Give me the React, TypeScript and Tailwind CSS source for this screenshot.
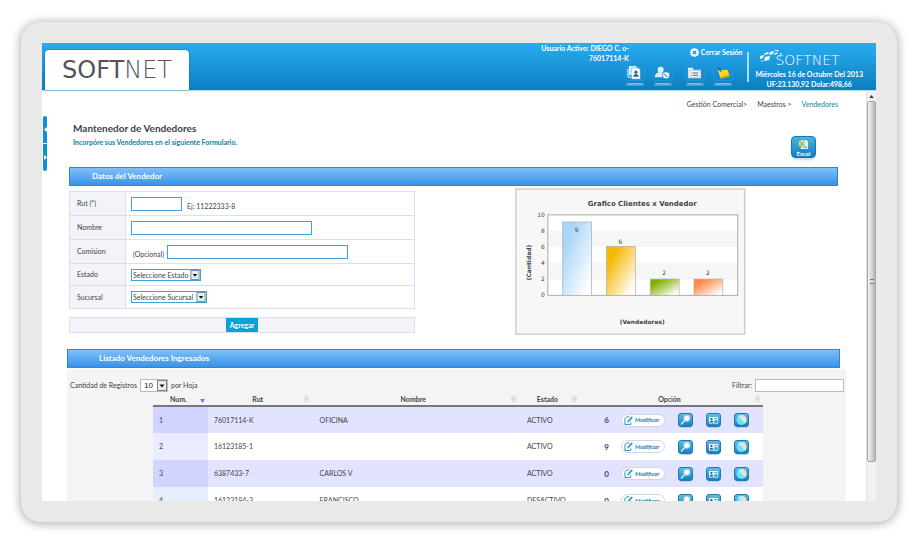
import React from "react";

const sellers = [
  { num: 1, rut: "76017114-K", name: "OFICINA", status: "ACTIVO", clients: 6 },
  { num: 2, rut: "16123185-1", name: "", status: "ACTIVO", clients: 9 },
  { num: 3, rut: "6387433-7", name: "CARLOS V", status: "ACTIVO", clients: 0 },
  { num: 4, rut: "16123184-3", name: "FRANCISCO", status: "DESACTIVO", clients: 0 },
];

const bars = [
  { value: 9, x: 48, from: "#a9d5f7", labelY: 44 },
  { value: 6, x: 92, from: "#f6b800", labelY: 56 },
  { value: 2, x: 136, from: "#7fb000", labelY: 88 },
  { value: 2, x: 180, from: "#ff8743", labelY: 88 },
];

const ticks = [0, 2, 4, 6, 8, 10];

const fieldStyle = "h-[14px] border border-[#3fa3d8] bg-white px-1 text-[7px] outline-none";

const Header = () => {
  return (
    <header className="flex h-12 shrink-0 justify-between border-b border-[#b5dcf2] bg-gradient-to-b from-[#29acf1] to-[#0a7fc0] text-white">
      {/* Logo tab */}
      <div className="ml-[3px] mt-[7px] flex w-36 items-center justify-center rounded-t-[4px] bg-white shadow-[0_0_2px_#075d95]">
        <a href="#" className="pb-px font-['DejaVu_Sans'] text-[24px] leading-[24px] text-[#555]">
          SOFT<span className="font-extralight text-[#555]">NET</span>
        </a>
      </div>

      <div className="flex pr-[13px]">
        {/* User */}
        <div className="mr-3 flex flex-col items-end">
          <div className="pr-11 text-right text-[7px] leading-[10px] font-bold">
            <p>Usuario Activo: DIEGO C. o-</p>
            <p>76017114-K</p>
          </div>
          <div className="flex gap-2">
            <HeaderButton label="Clientes">
              <path d="M2 1h8v10H2z" fill="#d8ecf8" />
              <path d="M5 3h7l2 2v10H5z" fill="#fff" stroke="#6bb2dc" strokeWidth=".6" />
              <circle cx="9.5" cy="7.6" r="1.7" fill="#2a6592" />
              <path d="M6.5 12.5c.2-2 1.6-3 3-3s2.800 1 3 3z" fill="#2a6592" />
              <path d="M4.500 13H1V4" stroke="#fff" fill="none" />
            </HeaderButton>
            <HeaderButton label="Contactos">
              <circle cx="6" cy="5" r="3.200" fill="#eef8ff" />
              <path d="M0 13c0-4 2.500-5.200 6-5.200s5.500 1.500 5.500 5.200z" fill="#d9effc" />
              <circle cx="11.800" cy="11" r="3.900" fill="#fff" stroke="#2498dc" />
              <path d="M10.200 9.400c.4 1.600 1.500 2.800 3.200 3.200" stroke="#1b7ebc" strokeWidth="1.100" fill="none" />
            </HeaderButton>
          </div>
        </div>

        {/* Session */}
        <div className="mr-[5px] flex flex-col justify-start pt-1">
          <button className="flex items-center gap-[2px] pl-[5px] text-[7px] leading-[11px] font-bold">
            <svg viewBox="0 0 10 10" className="size-[9px]">
              <circle cx="5" cy="5" r="4.800" fill="#fff" />
              <path d="m3.200 3.200 3.600 3.600m0-3.600L3.200 6.800" stroke="#1689cc" strokeWidth="1.400" />
            </svg>
            Cerrar Sesión
          </button>
          <div className="mt-[5px] flex gap-2">
            <HeaderButton label="Documentos">
              <path d="M1 3h5l1 2h8v9H1z" fill="#e9f1f6" />
              <path d="M2 6h12v7H2z" fill="#fff" stroke="#8fa9bb" strokeWidth=".6" />
              <path d="M4 8.500h1m1 0h6M4 11h1m1 0h6" stroke="#40627c" strokeWidth="1.100" />
            </HeaderButton>
            <HeaderButton label="Notas">
              <path d="M3 5.500 13.500 5l2 7-9.500 2.500z" fill="#ffd329" />
              <path d="m6 14.500 9.500-2.500-1-1.500L5 13z" fill="#e5a400" />
              <path d="m2 1 4 3 1 4-3-3z" fill="#1664bd" />
            </HeaderButton>
          </div>
        </div>

        <div className="mt-[9px] h-[30px] w-[2px] bg-[#a9def8]" />

        {/* Company info */}
        <div className="ml-[6px] flex flex-col items-center pt-[6px] text-[7px] leading-[10px] font-bold">
          <div className="flex h-5 self-start pl-1">
            <svg viewBox="0 0 24 16" className="-mr-2 h-4 w-6">
              <path d="M6 4l4-1-1 2-4 1zM1 7l4-1-1 3-3 1zM6 8l5-1-1 4-5 1zM11 3l4-1-1 3-4 1zM16 4l3-1-1 2-3 1zM16 1l4 0-1 1h-3zM21 4l2 1-2 1zM2 12l2-1-1 2zM20 7l2 0-1 1z" fill="#fff" />
            </svg>
            <span className="pt-[4px] font-['DejaVu_Sans'] text-[14px] leading-[14px] font-light">SOFTNET</span>
          </div>
          <p>Miércoles 16 de Octubre Del 2013</p>
          <p>UF:23.130,92 Dolar:498,66</p>
        </div>
      </div>
    </header>
  );
};

const HeaderButton = ({ label, children }: { label: string; children: React.ReactNode }) => {
  return (
    <button aria-label={label} className="flex flex-col items-center">
      <span className="flex h-[18px] w-5 items-center justify-center rounded-[3px] border border-[#2196d8]">
        <svg viewBox="0 0 16 16" className="size-[15px]">
          {children}
        </svg>
      </span>
      <span className="mt-[2px] h-[3px] w-[18px] rounded-t-[3px] bg-gradient-to-b from-[#8fc9ea] to-[#2b93cf]" />
    </button>
  );
};

const SectionBar = ({ title, className }: { title: string; className: string }) => {
  return (
    <h2
      className={`h-[19px] border border-[#2f86d4] bg-gradient-to-b from-[#7dc0fb] to-[#3893e4] text-[8px] leading-[17px] font-bold text-white ${className}`}
    >
      {title}
    </h2>
  );
};

const DropDown = ({ id, option, className }: { id: string; option: string; className: string }) => {
  return (
    <span className="relative inline-flex">
      <select id={id} className={`appearance-none outline-none ${className}`}>
        <option>{option}</option>
      </select>
      <svg viewBox="0 0 10 11" className="pointer-events-none absolute right-px top-px bottom-px h-[calc(100%-2px)] w-[10px]">
        <rect x=".5" y=".5" width="9" height="10" fill="#ececec" stroke="#6d8794" />
        <path d="M2.500 4.500h5L5 7.500z" fill="#111" />
      </svg>
    </span>
  );
};

const FormRow = ({ id, label, height, children }: { id: string; label: string; height: string; children: React.ReactNode }) => {
  return (
    <div className={`flex border-b border-[#dadef0] last:border-b-0 ${height}`}>
      <label htmlFor={id} className="flex w-14 items-center border-r border-[#dadef0] bg-[#f3f4fa] pl-[7px]">
        {label}
      </label>
      <div className="flex flex-1 items-center gap-[3px] pl-[5px]">{children}</div>
    </div>
  );
};

const Chart = () => {
  return (
    <svg viewBox="0 0 232 148" className="block w-full font-['DejaVu_Sans']" role="img" aria-label="Grafico Clientes x Vendedor">
      <defs>
        {bars.map((bar, i) => (
          <linearGradient key={i} id={`bar${i}`} x1="0" y1="0" x2="1" y2="1">
            <stop offset=".2" stopColor={bar.from} />
            <stop offset=".9" stopColor="#fff" />
          </linearGradient>
        ))}
      </defs>
      <rect x="1" y="1" width="230" height="146" fill="#f7f7f7" stroke="#cfcfcf" strokeWidth="1.500" />
      <text x="128" y="18" textAnchor="middle" fontSize="7" fontWeight="bold" fill="#444">
        Grafico Clientes x Vendedor
      </text>
      <rect x="33" y="27" width="191" height="81" fill="#fff" />
      <path d="M33 43h191v16H33zM33 75h191v17H33z" fill="#f6f6f6" />
      <rect x="33" y="27" width="191" height="81" fill="none" stroke="#aaa" />
      {ticks.map((tick) => (
        <text key={tick} x="30" y={110 - tick * 8.100} textAnchor="end" fontSize="6" fill="#444">
          {tick}
        </text>
      ))}
      {bars.map((bar, i) => (
        <g key={i}>
          <rect x={bar.x} y={108 - bar.value * 8.200} width="29" height={bar.value * 8.200} fill={`url(#bar${i})`} stroke="#b3b3b3" strokeWidth=".8" />
          <text x={bar.x + 14} y={bar.labelY} textAnchor="middle" fontSize="6" fill="#444">
            {bar.value}
          </text>
        </g>
      ))}
      <text x="128" y="137" textAnchor="middle" fontSize="6" fontWeight="bold" fill="#444">
        (Vendedores)
      </text>
      <text transform="translate(16 75) rotate(-90)" textAnchor="middle" fontSize="6" fontWeight="bold" fill="#444">
        (Cantidad)
      </text>
    </svg>
  );
};

const SortIcon = ({ active }: { active?: boolean }) => {
  return (
    <svg viewBox="0 0 6 10" className="absolute right-[3px] top-[3px] h-2 w-[5px]">
      {active ? <path d="M0 5h6L3 10z" fill="#6f76f5" /> : <path d="M3 .5 5.500 4.500h-5zM3 9.500.5 5.500h5z" fill="#eee" stroke="#c4c4c4" strokeWidth=".6" />}
    </svg>
  );
};

const TileButton = ({ label, children }: { label: string; children: React.ReactNode }) => {
  return (
    <button
      aria-label={label}
      className="flex h-[14px] w-[15px] items-center justify-center rounded-[3px] border border-[#2279ab] bg-gradient-to-b from-[#62bdea] to-[#0b82c5] shadow-[0_2px_1px_-1px_#c6cbd8]"
    >
      <svg viewBox="0 0 13 12" className="h-3 w-[13px]">
        {children}
      </svg>
    </button>
  );
};

const columns = [
  { title: "Num.", width: "w-[9%]" },
  { title: "Rut", width: "w-[17%]" },
  { title: "Nombre", width: "w-[34%]" },
  { title: "Estado", width: "w-[10%]" },
  { title: "Opción", width: "w-[30%]" },
];

const SellersTable = () => {
  return (
    <table className="w-full table-fixed border-collapse text-[7px] text-[#444]">
      <thead>
        <tr className="h-[14px] border-b-2 border-[#77777f]">
          {columns.map((column, i) => (
            <th key={column.title} className={`relative p-0 pr-1 font-bold leading-3 ${column.width}`}>
              {column.title}
              <SortIcon active={i === 0} />
            </th>
          ))}
        </tr>
      </thead>
      <tbody>
        {sellers.map((seller) => (
          <tr key={seller.num} className="group h-[27px] odd:bg-[#e2e3ff] even:bg-white">
            <td className="p-0 pl-[6px] group-odd:bg-[#d1d4ff] group-even:bg-[#e9ebff]">{seller.num}</td>
            <td className="p-0 pl-[6px]">{seller.rut}</td>
            <td className="p-0 pl-2">{seller.name}</td>
            <td className="p-0 pl-2">{seller.status}</td>
            <td className="p-0">
              <div className="flex items-center gap-[13px]">
                <span className="-mr-px w-[29px] text-right text-[8px] font-bold text-[#3d3792]">{seller.clients}</span>
                <button className="flex h-[13px] w-11 items-center gap-[2px] rounded-full border border-[#cfd6e2] bg-white pl-[2px] text-[6px] font-bold italic leading-none text-[#1a7db3]">
                  <svg viewBox="0 0 10 10" className="size-[9px] shrink-0" fill="none" stroke="#1b86bd">
                    <path d="M6 1H3L1 3v6.400h6.500V7" />
                    <path d="m4 7 .5-1.800L8.500.8l1 1-4.200 4.500z" fill="#1b86bd" strokeWidth=".5" />
                  </svg>
                  Modificar
                </button>
                <TileButton label="Ver">
                  <path d="m2 10.500 4-4.500" stroke="#d5f1ff" strokeWidth="1.400" />
                  <circle cx="7.800" cy="4.300" r="3" fill="#fff" stroke="#b3cbd8" strokeWidth=".8" />
                </TileButton>
                <TileButton label="Clientes">
                  <path d="M2 3h9v6.500H2z" fill="#eef7fb" />
                  <circle cx="4.500" cy="5" r="1.100" fill="#26526e" />
                  <path d="M2.700 8.500c0-2.500 3.600-2.500 3.600 0z" fill="#26526e" />
                  <path d="M7.500 4.500h2.500" stroke="#4a86a5" strokeWidth=".8" />
                  <circle cx="9" cy="7.700" r="2.200" fill="#35b5cf" stroke="#d9f3fa" strokeWidth=".6" />
                </TileButton>
                <TileButton label="Estadísticas">
                  <circle cx="6.500" cy="6" r="5" fill="#6fe0fa" />
                  <path d="M6.500 6V1A5 5 0 0 1 10 9.500z" fill="#e9e6c9" />
                  <path d="M6.500 6 3 2.500A5 5 0 0 1 6.500 1z" fill="#b8f2ff" />
                </TileButton>
              </div>
            </td>
          </tr>
        ))}
      </tbody>
    </table>
  );
};

const ScrollBar = () => {
  return (
    <div className="flex w-[10px] shrink-0 flex-col border-l border-[#e3e3e3] bg-[#f1f1f1]">
      <button aria-label="Subir" className="flex h-[10px] items-center justify-center">
        <svg viewBox="0 0 6 4" className="h-[3px] w-[5px]">
          <path d="M3 0 6 4H0z" fill="#333" />
        </svg>
      </button>
      <div className="flex h-[88%] items-center justify-center rounded-[2px] border border-[#a3a3a8] bg-gradient-to-r from-[#f4f4f6] to-[#b5b6bd]">
        <span className="h-[5px] w-1 border-y border-[#777]" />
      </div>
    </div>
  );
};

const App = () => {
  return (
    <div className="flex h-screen bg-white px-[21px] py-[22px] font-['Lato',sans-serif] text-[7px] text-[#444]">
      <div className="flex flex-1 rounded-[20px] bg-[#e9e9e9] p-[21px] shadow-[0_1px_9px_2px_#bcbcbc]">
        <div className="flex flex-1 flex-col overflow-hidden bg-white">
          <Header />
          <div className="flex min-h-0 flex-1">
            {/* Side menu handles */}
            <div className="ml-px mt-[25px] flex w-1 shrink-0 flex-col gap-px">
              <button aria-label="Ocultar menu" className="flex h-[27px] items-center justify-center rounded-t-[2px] bg-[#0b93d3]">
                <svg viewBox="0 0 3 5" className="h-[5px] w-[3px]">
                  <path d="M3 0v5L0 2.500z" fill="#fff" />
                </svg>
              </button>
              <button aria-label="Mostrar menu" className="flex h-[27px] items-center justify-center rounded-b-[2px] bg-[#0b93d3]">
                <svg viewBox="0 0 3 5" className="h-[5px] w-[3px]">
                  <path d="M0 0v5l3-2.500z" fill="#fff" />
                </svg>
              </button>
            </div>

            <main className="min-w-0 flex-1 overflow-hidden pl-5 pr-5">
              <nav className="flex justify-end gap-[10px] pr-2 pt-2 leading-[10px]">
                <a href="#">Gestión Comercial&gt;</a>
                <a href="#">Maestros &gt;</a>
                <a href="#" className="text-[#0a7fa8]">
                  Vendedores
                </a>
              </nav>

              {/* Title */}
              <div className="flex h-[58px] items-start justify-between pl-[6px] pr-[30px] pt-[11px]">
                <div>
                  <h1 className="text-[10px] leading-4 font-bold text-[#3c4347]">Mantenedor de Vendedores</h1>
                  <p className="text-[7px] leading-3 font-bold text-[#12809f]">Incorpóre sus Vendedores en el siguiente Formulario.</p>
                </div>
                <button className="mt-4 flex h-[22px] w-[25px] flex-col items-center rounded-[4px] border border-[#0f7ab5] bg-gradient-to-b from-[#4bb2e6] to-[#0a7fc2] pt-[2px] text-[6px] leading-[7px] font-bold text-white shadow-[0_4px_3px_-2px_#d5d5d5]">
                  <svg viewBox="0 0 12 12" className="size-[11px]">
                    <path d="M3 1h6l2 2v8H3z" fill="#eef7e5" />
                    <path d="M1 2h6v6H1z" fill="#dcebc0" stroke="#86a63f" strokeWidth=".6" />
                    <path d="m2.500 3.500 3 3.500m0-3.500-3 3.500" stroke="#5f8f1d" />
                    <path d="M6 8h4v2H6z" fill="#7fc3dd" />
                  </svg>
                  Excel
                </button>
              </div>

              {/* Form and chart */}
              <section className="pl-[2px] pr-2">
                <SectionBar title="Datos del Vendedor" className="pl-[22px]" />
                <div className="flex items-start">
                  <form className="mt-[5px] w-[45%]">
                    <div className="border border-[#dadef0]">
                      <FormRow id="rut" label="Rut (*)" height="h-6">
                        <input id="rut" className={`w-[51px] ${fieldStyle}`} />
                        <span className="pl-[2px] pt-[5px]">Ej: 11222333-8</span>
                      </FormRow>
                      <FormRow id="nombre" label="Nombre" height="h-6">
                        <input id="nombre" className={`w-[181px] ${fieldStyle}`} />
                      </FormRow>
                      <FormRow id="comision" label="Comision" height="h-6">
                        <span className="pl-[2px] pt-[5px]">(Opcional)</span>
                        <input id="comision" className={`w-[181px] ${fieldStyle}`} />
                      </FormRow>
                      <FormRow id="estado" label="Estado" height="h-[22px]">
                        <DropDown id="estado" option="Seleccione Estado" className="h-3 w-[70px] border border-[#3fa3d8] pl-px text-[7px] leading-[10px]" />
                      </FormRow>
                      <FormRow id="sucursal" label="Sucursal" height="h-[22px]">
                        <DropDown id="sucursal" option="Seleccione Sucursal" className="h-3 w-[76px] border border-[#3fa3d8] pl-px text-[7px] leading-[10px]" />
                      </FormRow>
                    </div>
                    <div className="mt-2 flex h-4 items-center justify-center border border-[#dadef0] bg-[#f3f4fa]">
                      <button type="button" className="h-[14px] bg-[#0ba3d6] px-1 text-[7px] leading-[14px] font-bold text-white">
                        Agregar
                      </button>
                    </div>
                  </form>
                  <div className="ml-[13%] mt-[2px] w-[30%]">
                    <Chart />
                  </div>
                </div>
              </section>

              {/* List */}
              <section className="mt-[14px]">
                <SectionBar title="Listado Vendedores Ingresados" className="mr-[6px] pl-[31px]" />
                <div className="mt-px bg-[#f4f4f4] pt-[10px] pb-6">
                  <div className="flex items-center justify-between pl-[3px] pr-[2px]">
                    <div className="flex items-center gap-[3px]">
                      <label htmlFor="cantidad">Cantidad de Registros</label>
                      <DropDown
                        id="cantidad"
                        option="10"
                        className="h-[13px] w-7 border border-[#bbb] bg-white pl-[3px] font-['Liberation_Sans'] text-[8px] leading-[11px] text-[#222]"
                      />
                      <span>por Hoja</span>
                    </div>
                    <div className="flex items-center gap-[3px]">
                      <label htmlFor="filtrar">Filtrar:</label>
                      <input id="filtrar" className="h-[13px] w-[89px] border border-[#bbb] bg-white px-1 outline-none" />
                    </div>
                  </div>
                  <div className="pl-[86px] pr-[83px]">
                    <SellersTable />
                  </div>
                </div>
              </section>
            </main>

            <ScrollBar />
          </div>
        </div>
      </div>
    </div>
  );
};

export default App;
